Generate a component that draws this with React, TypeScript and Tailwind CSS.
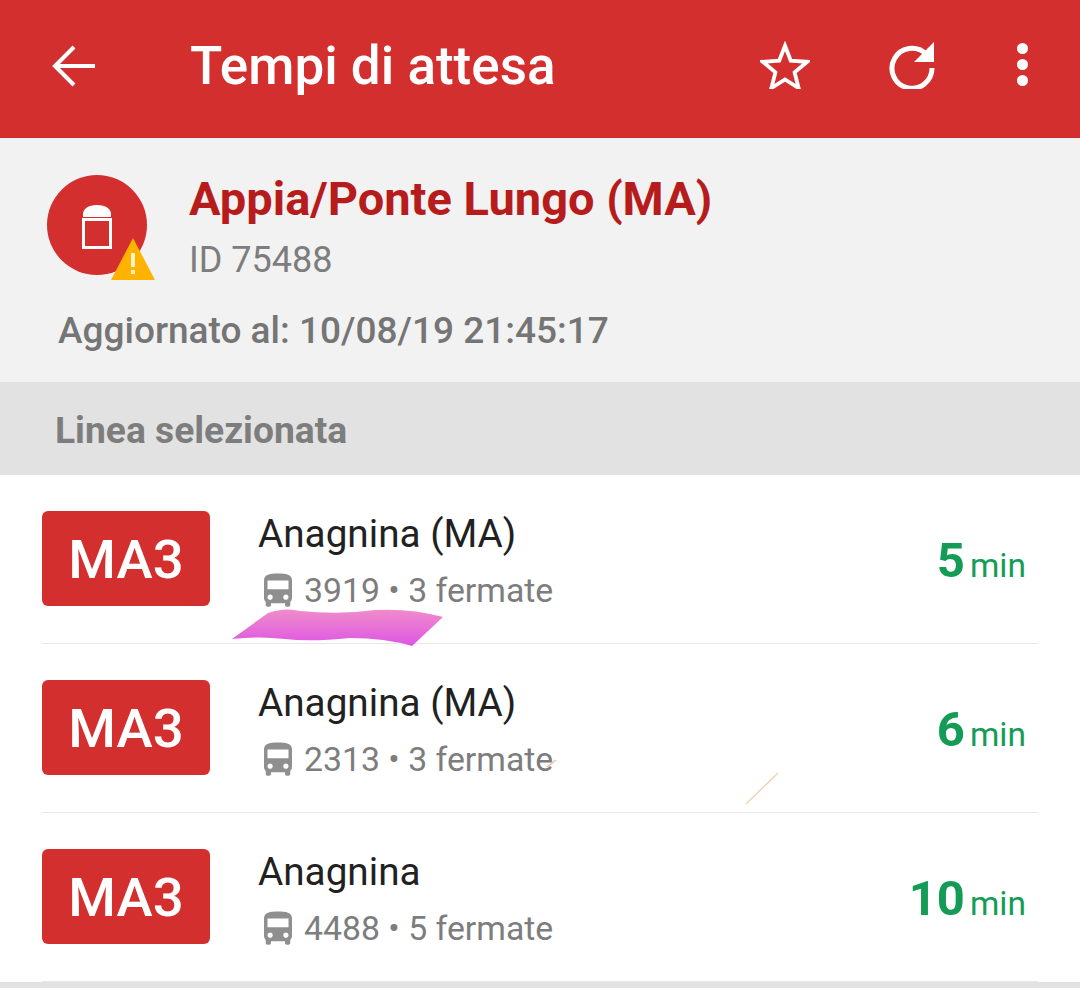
const arrivals = [
  { line: 'MA3', dest: 'Anagnina (MA)', bus: '3919', stops: '3 fermate', time: '5' },
  { line: 'MA3', dest: 'Anagnina (MA)', bus: '2313', stops: '3 fermate', time: '6' },
  { line: 'MA3', dest: 'Anagnina', bus: '4488', stops: '5 fermate', time: '10' },
]

function BusIcon() {
  return (
    <svg viewBox="0 0 24 24" className="-ml-[1px] w-[42px] h-[42px] shrink-0 fill-[#8f8f8f]">
      <path d="M4 16c0 .88.39 1.67 1 2.22V20c0 .55.45 1 1 1h1c.55 0 1-.45 1-1v-1h8v1c0 .55.45 1 1 1h1c.55 0 1-.45 1-1v-1.78c.61-.55 1-1.34 1-2.22V6c0-3.5-3.58-4-8-4s-8 .5-8 4v10zm3.5 1c-.83 0-1.5-.67-1.5-1.5S6.67 14 7.5 14s1.500.67 1.500 1.500S8.33 17 7.5 17zm9 0c-.83 0-1.5-.67-1.5-1.5s.67-1.5 1.500-1.500 1.500.67 1.500 1.500-.67 1.500-1.500 1.500zm1.500-6H6V6h12v5z" />
    </svg>
  )
}

function StopIcon() {
  return (
    <div className="relative w-[100px] h-[100px] rounded-full bg-[#d32f2f] flex items-center justify-center">
      <svg viewBox="0 0 30 44" className="w-[30px] h-[44px] mt-[3px]">
        <path d="M1 12V9C1 4 6 0 15 0s14 4 14 9v3z" fill="#fff" />
        <path d="M1.500 14.500h27v28h-27z" fill="none" stroke="#fff" strokeWidth="3" />
      </svg>
      <svg viewBox="0 0 44 42" className="absolute left-[64px] top-[63px] w-[44px] h-[42px]">
        <path d="M22 0l22 42H0z" fill="#ffb300" />
        <path d="M20 15h4v14h-4zM20 32h4v4h-4z" fill="#fff3c4" />
      </svg>
    </div>
  )
}

export default function App() {
  return (
    <div className="relative w-[1080px] h-[988px] overflow-hidden bg-white font-['Roboto',sans-serif]">
      <header className="h-[138px] bg-[#d32f2f] flex items-center pl-[52px] pr-[52px] text-white">
        <svg viewBox="0 0 44 44" className="w-[44px] h-[44px] -mt-[6px] fill-none stroke-white stroke-[4] shrink-0">
          <path d="M43 22H3M22 3L3 22l19 19" />
        </svg>
        <h1 className="ml-[94px] text-[53px] font-medium leading-none -mt-[6px]">Tempi di attesa</h1>
        <div className="ml-auto -mt-[9px] flex items-center">
          <svg viewBox="0 0 52 50" className="w-[50px] h-[48px] fill-none stroke-white stroke-[4]">
            <path d="M26 5l6 15.500 17 1.200-13 11 4.200 16.300L26 40l-14.200 9L16 32.700l-13-11 17-1.200z" />
          </svg>
          <svg viewBox="0 0 48 48" className="ml-[78px] w-[48px] h-[48px] fill-none">
            <path d="M38 13A20 20 0 1 0 44 27" stroke="#fff" strokeWidth="5" />
            <path d="M46 1v20H26z" fill="#fff" />
          </svg>
          <div className="ml-[81px] flex flex-col gap-[5px]">
            <span className="w-[11px] h-[11px] rounded-full bg-white" />
            <span className="w-[11px] h-[11px] rounded-full bg-white" />
            <span className="w-[11px] h-[11px] rounded-full bg-white" />
          </div>
        </div>
      </header>

      <section className="h-[244px] bg-[#f2f2f2] pt-[37px] pl-[47px]">
        <div className="flex">
          <StopIcon />
          <div className="ml-[42px]">
            <h2 className="text-[47px] font-bold leading-[52px] -mt-[2px] text-[#b71c1c]">Appia/Ponte Lungo (MA)</h2>
            <p className="text-[36px] leading-[42px] mt-[14px] text-[#7d7d7d]">ID 75488</p>
          </div>
        </div>
        <p className="ml-[11px] mt-[29px] text-[37px] font-medium leading-[42px] text-[#757575]">Aggiornato al: 10/08/19 21:45:17</p>
      </section>

      <div className="h-[93px] bg-[#e2e2e2] flex items-center pl-[55px] pt-[5px] text-[37.200px] font-bold text-[#7d7d7d]">
        Linea selezionata
      </div>

      <ul className="px-[42px]">
        {arrivals.map((a, i) => (
          <li key={i} className="h-[169px] border-b border-[#e8e8e8] flex items-center">
            <div className="w-[168px] h-[95px] -mt-[1px] rounded-[6px] bg-[#d32f2f] flex items-center justify-center pt-[3px] text-white text-[54.500px] font-medium">
              {a.line}
            </div>
            <div className="ml-[48px] flex-1 pt-[5px]">
              <div className="text-[38.700px] leading-[44px] text-[#212121]">{a.dest}</div>
              <div className="mt-[14px] flex items-center text-[33.800px] leading-[40px] text-[#7d7d7d]">
                <BusIcon />
                <span className="ml-[5px]">{a.bus} • {a.stops}</span>
              </div>
            </div>
            <div className="pr-[12px] pt-[3px] flex items-baseline text-[#149c57]">
              <span className="text-[49px] font-bold">{a.time}</span>
              <span className="ml-[5px] text-[33.500px]">min</span>
            </div>
          </li>
        ))}
      </ul>
      <div className="h-[7px] bg-[#e2e2e2]" />

      {/* scribbles drawn on top of the screenshot */}
      <svg viewBox="0 0 1080 988" className="absolute inset-0 w-[1080px] h-[988px] pointer-events-none">
        <defs>
          <linearGradient id="swipe" x1="0" y1="0" x2="0" y2="1">
            <stop offset="0" stopColor="#f08ccb" />
            <stop offset="1" stopColor="#de55e3" />
          </linearGradient>
        </defs>
        <path d="M232 639L268 613Q285 607 300 611Q340 615 375 610Q410 608 443 617L412 646Q385 638 350 638Q310 642 285 639Q260 636 232 639z" fill="url(#swipe)" />
        <path d="M746 804L778 773" stroke="#f3d3b0" strokeWidth="1.500" />
        <path d="M547 767L556 760" stroke="#f3c0a0" strokeWidth="1.500" />
      </svg>
    </div>
  )
}
